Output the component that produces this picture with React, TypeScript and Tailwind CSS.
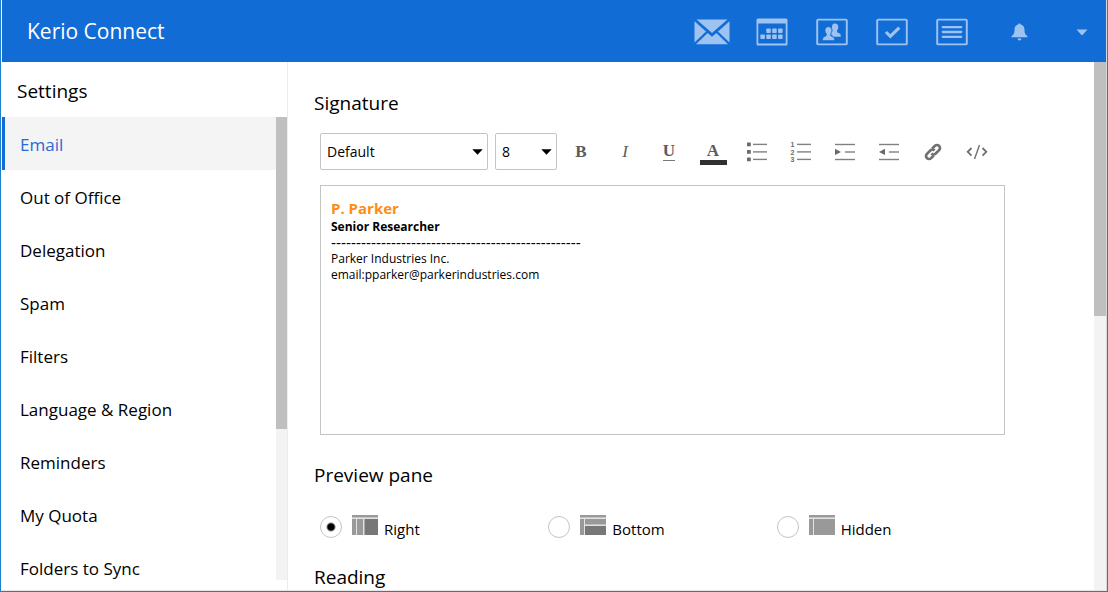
import { useState } from 'react';

const menuItems = [
  'Email',
  'Out of Office',
  'Delegation',
  'Spam',
  'Filters',
  'Language & Region',
  'Reminders',
  'My Quota',
  'Folders to Sync'
];

const MailIcon = () => (
  <svg width="36" height="26" viewBox="0 0 36 26" fill="#9fc3f0">
    <path d="M2.5 0.5h31L18 14z" />
    <path d="M0.5 2.3 12 12.6 0.5 23.6z" />
    <path d="M35.5 2.3 24 12.6 35.5 23.6z" />
    <path d="M13.6 14 18 17.8 22.4 14 34 25.2H2z" />
  </svg>
);

const CalendarIcon = () => (
  <svg width="32" height="28" viewBox="0 0 32 28" fill="#9fc3f0">
    <path
      fillRule="evenodd"
      d="M2 0.5h28a1.5 1.5 0 0 1 1.5 1.5v24a1.5 1.5 0 0 1-1.5 1.5H2a1.5 1.5 0 0 1-1.5-1.5V2A1.5 1.5 0 0 1 2 .5zM2.3 5.5v20h27.4v-20z"
    />
    {[10.3, 16.2, 22.1].map((x) => (
      <rect key={x} x={x} y="10.5" width="4.5" height="4.5" rx="0.8" />
    ))}
    {[4.4, 10.3, 16.2, 22.1].map((x) => (
      <rect key={x} x={x} y="16.5" width="4.5" height="4.5" rx="0.8" />
    ))}
  </svg>
);

const ContactsIcon = () => (
  <svg width="32" height="28" viewBox="0 0 33 28" fill="#9fc3f0">
    <rect x="1.25" y="1.25" width="30.5" height="25.5" rx="1" fill="none" stroke="#9fc3f0" strokeWidth="2" />
    <path d="M19.5 5.3c2.3 0 3.5 1.5 3.5 3.6 0 1.5-.5 2.7-1.3 3.5v1.6c0 .8 3.8 1.2 3.8 3.2v1.6h-7.5c-.5-1.3-2.3-1.8-2.6-2.6 1.5-1.7 2-4.2 1-6.3-.2-2.6.8-4.6 3.1-4.6z" />
    <path
      d="M12.8 8.7c2.3 0 3.5 1.5 3.5 3.7 0 1.5-.5 2.7-1.3 3.5v1.7c0 .8 4 1.2 4 3.5v1.7H6.8v-1.7c0-2.3 3.9-2.7 3.9-3.5v-1.7c-.8-.8-1.4-2-1.4-3.5 0-2.2 1.2-3.7 3.5-3.7z"
      stroke="#116cd6"
      strokeWidth="0.6"
    />
  </svg>
);

const TasksIcon = () => (
  <svg width="32" height="28" viewBox="0 0 33 28" fill="none" stroke="#9fc3f0">
    <rect x="1.25" y="1.25" width="30.5" height="25.5" rx="1" strokeWidth="2" />
    <path d="M10.2 14 14.8 18.4 24 9.4" strokeWidth="3.2" />
  </svg>
);

const NotesIcon = () => (
  <svg width="32" height="28" viewBox="0 0 33 28" fill="none" stroke="#9fc3f0" strokeWidth="2">
    <rect x="1.25" y="1.25" width="30.5" height="25.5" rx="1" />
    <path d="M7 9h19M7 14h19M7 19h19" strokeWidth="2.4" strokeLinecap="round" />
  </svg>
);

const BellIcon = () => (
  <svg width="17" height="18" viewBox="0 0 17 18" fill="#9fc3f0">
    <path d="M8.5.5c.8 0 1.2.4 1.3.9 2.4.6 3.7 2.6 3.7 5.2 0 3.8.8 5.2 3 6.6v1.1H.5v-1.1c2.2-1.4 3-2.8 3-6.6 0-2.6 1.3-4.6 3.7-5.2.1-.5.5-.9 1.3-.9z" />
    <path d="M6.5 15.5h4c-.2 1.3-1 2-2 2s-1.8-.7-2-2z" />
  </svg>
);

const CaretIcon = () => (
  <svg width="12" height="7" viewBox="0 0 12 7" fill="#9fc3f0">
    <path d="M0.5 0.5h11L6 6.5z" />
  </svg>
);

const BulletListIcon = () => (
  <svg width="22" height="20" viewBox="0 0 22 20" fill="#6a6a6a">
    {[2, 9.5, 17].map((y) => (
      <g key={y}>
        <rect x="1" y={y - 1.5} width="3.8" height="3.8" rx="0.5" />
        <rect x="7" y={y - 0.3} width="14" height="1.4" fill="#808080" />
      </g>
    ))}
  </svg>
);

const NumberListIcon = () => (
  <svg width="22" height="22" viewBox="0 0 22 22" fill="#6a6a6a">
    {[1, 2, 3].map((n) => (
      <g key={n}>
        <text x="0.5" y={n * 7.5 - 1.5} fontSize="7" fontWeight="700" fontFamily="Liberation Sans, sans-serif">
          {n}
        </text>
        <rect x="7" y={n * 7.5 - 4.8} width="14" height="1.4" fill="#808080" />
      </g>
    ))}
  </svg>
);

const IndentIcon = () => (
  <svg width="22" height="18" viewBox="0 0 22 18" fill="#808080">
    <rect x="1" y="0.8" width="20" height="1.4" />
    <path d="M1 5.8 7 8.9 1 12z" fill="#6a6a6a" />
    <rect x="11" y="8.3" width="10" height="1.4" />
    <rect x="1" y="15.8" width="20" height="1.4" />
  </svg>
);

const OutdentIcon = () => (
  <svg width="22" height="18" viewBox="0 0 22 18" fill="#808080">
    <rect x="1" y="0.8" width="20" height="1.4" />
    <path d="M7 5.8 1 8.9l6 3.1z" fill="#6a6a6a" />
    <rect x="11" y="8.3" width="10" height="1.4" />
    <rect x="1" y="15.8" width="20" height="1.4" />
  </svg>
);

const LinkIcon = () => (
  <svg width="18" height="18" viewBox="0 0 18 18" fill="none" stroke="#707070" strokeWidth="2.7">
    <g transform="rotate(-45 9 9)">
      <path d="M7 12H3.4a3 3 0 0 1 0-6h4.8a3 3 0 0 1 3 3" />
      <path d="M11 6h3.6a3 3 0 0 1 0 6H9.8a3 3 0 0 1-3-3" />
    </g>
  </svg>
);

const CodeIcon = () => (
  <svg width="22" height="18" viewBox="0 0 22 18" fill="none" stroke="#707070">
    <path d="M5.5 5 1.7 8.8 5.5 12.6" strokeWidth="1.8" />
    <path d="M16.5 5 20.3 8.8 16.5 12.6" strokeWidth="1.8" />
    <path d="M13.5 2 8.5 16" strokeWidth="1.4" />
  </svg>
);

const RightPaneIcon = () => (
  <svg width="26" height="20" viewBox="0 0 26 20" fill="#999999">
    <rect width="26" height="20" fill="#e2e2e2" />
    <rect width="26" height="2.4" />
    <rect y="4" width="4" height="16" />
    <rect x="5" y="4" width="6" height="16" />
    <rect x="12.5" y="4" width="13.5" height="16" fill="#777777" />
  </svg>
);

const BottomPaneIcon = () => (
  <svg width="26" height="20" viewBox="0 0 26 20" fill="#999999">
    <rect width="26" height="20" fill="#e2e2e2" />
    <rect width="26" height="2.4" />
    <rect y="4" width="4" height="16" />
    <rect x="5" y="4" width="21" height="5.5" />
    <rect x="5" y="11" width="21" height="9" fill="#777777" />
  </svg>
);

const HiddenPaneIcon = () => (
  <svg width="26" height="20" viewBox="0 0 26 20" fill="#999999">
    <rect width="26" height="20" fill="#e2e2e2" />
    <rect width="26" height="2.4" />
    <rect y="4" width="4" height="16" />
    <rect x="5" y="4" width="21" height="16" />
  </svg>
);

const apps = [
  { title: 'Mail', icon: MailIcon },
  { title: 'Calendar', icon: CalendarIcon },
  { title: 'Contacts', icon: ContactsIcon },
  { title: 'Tasks', icon: TasksIcon },
  { title: 'Notes', icon: NotesIcon }
];

const formatButtons = [
  { title: 'Bulleted list', icon: BulletListIcon },
  { title: 'Numbered list', icon: NumberListIcon },
  { title: 'Increase indent', icon: IndentIcon },
  { title: 'Decrease indent', icon: OutdentIcon },
  { title: 'Insert link', icon: LinkIcon },
  { title: 'Edit source', icon: CodeIcon }
];

const previewOptions = [
  { value: 'Right', icon: RightPaneIcon },
  { value: 'Bottom', icon: BottomPaneIcon },
  { value: 'Hidden', icon: HiddenPaneIcon }
];

const SelectBox = ({ label, options, className }: { label: string; options: string[]; className: string }) => (
  <div className={`relative ${className}`}>
    <select
      aria-label={label}
      className="h-full w-full appearance-none rounded-xs border border-[#c4c4c4] bg-white pl-1.5 text-sm"
    >
      {options.map((option) => (
        <option key={option}>{option}</option>
      ))}
    </select>
    <svg
      className="pointer-events-none absolute right-[5px] top-4"
      width="11"
      height="6"
      viewBox="0 0 11 6"
    >
      <path d="M0.3 0.3h10.4L5.5 5.7z" />
    </svg>
  </div>
);

const Header = () => (
  <header className="flex h-[62px] shrink-0 items-center bg-[#116cd6] pt-0.5">
    <h1 className="flex-1 pl-[25px] text-[21px] text-white">Kerio Connect</h1>
    <nav className="flex items-center">
      {apps.map((app) => {
        const Icon = app.icon;
        return (
          <button key={app.title} aria-label={app.title} className="flex w-15 justify-center">
            <Icon />
          </button>
        );
      })}
      <button aria-label="Notifications" className="flex w-[75px] justify-center">
        <BellIcon />
      </button>
      <button aria-label="Account menu" className="flex w-[49px] justify-center">
        <CaretIcon />
      </button>
    </nav>
  </header>
);

export default function App() {
  const [activeItem, setActiveItem] = useState('Email');
  const [previewPane, setPreviewPane] = useState('Right');

  return (
    <div className="h-screen border-x border-b border-[#1c80cc] bg-white font-['Open_Sans',sans-serif] text-black">
      <div className="flex h-full flex-col overflow-hidden border-b border-l border-r border-b-[#e4e4e4] border-l-white border-r-[#d8d8d8]">
        <Header />

        <div className="flex min-h-0 flex-1">
          {/* Settings menu */}
          <aside className="flex w-[286px] shrink-0 flex-col border-r border-[#ececec] pb-2.5">
            <h2 className="flex h-[55px] shrink-0 items-center pl-[15px] pt-1 text-[19px]">Settings</h2>
            <div className="flex min-h-0 flex-1">
              <ul className="flex-1 overflow-hidden">
                {menuItems.map((item) => (
                  <li key={item}>
                    <button
                      onClick={() => setActiveItem(item)}
                      className={`flex h-[53px] w-full items-center border-l-3 pl-[15px] pt-0.5 text-[17px] ${
                        activeItem === item
                          ? 'border-[#116cd6] bg-[#f4f4f4] text-[#2a69d4]'
                          : 'border-transparent'
                      }`}
                    >
                      {item}
                    </button>
                  </li>
                ))}
              </ul>
              <div className="w-[11px] bg-[#f3f3f3]">
                <div className="h-[312px] bg-[#bfbfbf]" />
              </div>
            </div>
          </aside>

          {/* Settings content */}
          <main className="flex-1 overflow-hidden pl-[26px] pr-[89px]">
            <section className="pt-7">
              <h2 className="text-[19px] leading-[26px]">Signature</h2>
              <div className="pl-1.5 pt-[17px]">
                <div className="flex h-[37px] items-center">
                  <SelectBox label="Font" options={['Default', 'Arial', 'Verdana']} className="mr-[7px] h-full w-[168px]" />
                  <SelectBox label="Font size" options={['8', '10', '12', '14']} className="mr-0.5 h-full w-[62px]" />
                  <div className="flex items-center font-['Liberation_Serif',serif] text-[17px] leading-[18px] text-[#5c5c5c]">
                    <button aria-label="Bold" className="w-11 font-bold">B</button>
                    <button aria-label="Italic" className="w-11 italic">I</button>
                    <button aria-label="Underline" className="flex w-11 justify-center">
                      <span className="border-b border-[#777777] font-bold">U</span>
                    </button>
                    <button aria-label="Text color" className="flex w-11 justify-center pt-1">
                      <span className="w-[27px] border-b-5 border-[#303030] font-bold">A</span>
                    </button>
                    {formatButtons.map((button) => {
                      const Icon = button.icon;
                      return (
                        <button key={button.title} aria-label={button.title} className="flex w-11 justify-center">
                          <Icon />
                        </button>
                      );
                    })}
                  </div>
                </div>
                <div
                  role="textbox"
                  aria-label="Signature"
                  contentEditable
                  suppressContentEditableWarning
                  className="mt-[15px] h-[250px] border border-[#c4c4c4] px-2.5 pt-[13px] text-xs leading-4"
                >
                  <p className="text-[15px] leading-[19px] font-bold text-[#ff8c14]">P. Parker</p>
                  <p className="leading-[17px] font-bold">Senior Researcher</p>
                  <p className="font-['Liberation_Sans',sans-serif] text-[15px] leading-4">
                    --------------------------------------------------
                  </p>
                  <p>Parker Industries Inc.</p>
                  <p>email:pparker@parkerindustries.com</p>
                </div>
              </div>
            </section>

            <section className="pt-[27px]">
              <h2 className="text-[19px] leading-[26px]">Preview pane</h2>
              <div className="grid grid-cols-3 pl-1.5 pt-7">
                {previewOptions.map((option) => {
                  const Icon = option.icon;
                  return (
                    <label key={option.value} className="flex h-[22px] items-center">
                      <input
                        type="radio"
                        name="preview"
                        value={option.value}
                        checked={previewPane === option.value}
                        onChange={() => setPreviewPane(option.value)}
                        className="mr-2.5 size-[22px] appearance-none rounded-full border border-[#c4c4c4] bg-white checked:bg-[radial-gradient(circle,#000000_3px,transparent_5px)]"
                      />
                      <span className="pb-1">
                        <Icon />
                      </span>
                      <span className="pl-1.5 pt-1 text-[15px]">{option.value}</span>
                    </label>
                  );
                })}
              </div>
            </section>

            <section className="pt-[26px]">
              <h2 className="text-[19px] leading-[26px]">Reading</h2>
            </section>
          </main>
          <div className="w-3 bg-[#f3f3f3]">
            <div className="h-[254px] bg-[#bfbfbf]" />
          </div>
        </div>
      </div>
    </div>
  );
}
